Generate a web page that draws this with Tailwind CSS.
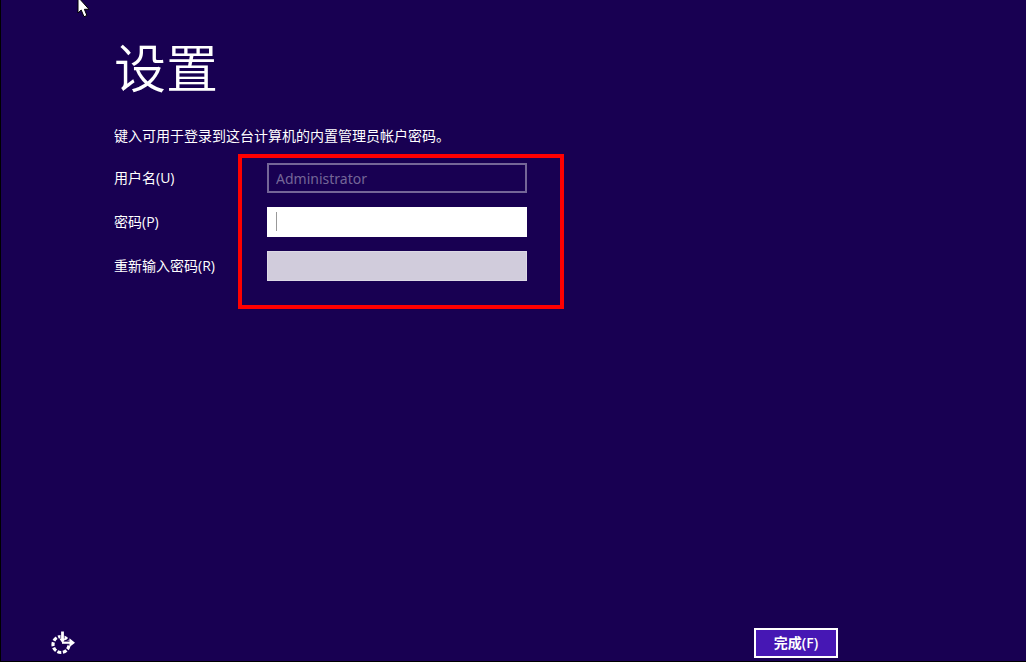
<!DOCTYPE html>
<html lang="zh-CN">
<head>
<meta charset="utf-8">
<meta name="viewport" content="width=device-width, initial-scale=1">
<title>设置</title>
<script src="https://cdn.jsdelivr.net/npm/@tailwindcss/browser@4"></script>
</head>
<body class="relative flex min-h-screen flex-col border-b border-l border-black bg-[#180052] font-['Open_Sans','Noto_Sans_CJK_SC',sans-serif] text-sm text-white">
  <main class="flex-1 pl-[113px] pt-8">
    <h1 class="font-['Noto_Sans_CJK_SC',sans-serif] text-[52px] leading-[68px] font-[350]">设置</h1>
    <p class="mt-[26px] leading-5">键入可用于登录到这台计算机的内置管理员帐户密码。</p>
    <form id="setup" class="relative mt-[17px] flex flex-col gap-[14px]">
      <div class="flex items-center">
        <label for="user" class="w-[153px]">用户名(U)</label>
        <input id="user" type="text" value="Administrator" disabled class="h-[30px] w-[260px] border-2 border-[#746697] bg-transparent px-[7px] font-['Noto_Sans',sans-serif] text-sm text-[#746697]">
      </div>
      <div class="flex items-center">
        <label for="pass" class="w-[153px]">密码(P)</label>
        <div class="relative">
          <input id="pass" type="password" class="block h-[30px] w-[260px] bg-white px-2 text-sm text-black caret-transparent outline-none">
          <span class="absolute left-[9px] top-[5px] h-[19px] w-px bg-[#999999]"></span>
        </div>
      </div>
      <div class="flex items-center">
        <label for="again" class="w-[153px]">重新输入密码(R)</label>
        <input id="again" type="password" class="h-[30px] w-[260px] border border-[#dcd8e5] bg-[#d1ccdc] px-2 text-sm text-black outline-none">
      </div>
      <div class="pointer-events-none absolute -top-[9px] left-[124px] h-[155px] w-[326px] border-4 border-[#ff0000]"></div>
    </form>
  </main>
  <footer class="flex items-end justify-between pb-[3px] pl-12 pr-[188px]">
    <button type="button" aria-label="轻松使用">
      <svg class="block" width="28" height="28" viewBox="0 0 28 28" fill="none" stroke="#fff">
        <circle cx="12" cy="14.500" r="8" stroke-width="3.200" stroke-dasharray="4 1.585" stroke-dashoffset="-1"/>
        <path d="M13.500 1v11M13.500 12.500h9" stroke="#180052" stroke-width="4"/>
        <path d="M13.500 1.500v9" stroke-width="2.800"/>
        <path d="M10.300 8.500h6.400l-3.200 4.700zM20.500 8.300l5.500 4.400-5.500 4.400z" fill="#fff" stroke="none"/>
        <path d="M13 12.700h9" stroke-width="2.200"/>
      </svg>
    </button>
    <button type="submit" form="setup" class="h-[30px] w-[84px] border-2 border-white bg-[#4617b4] font-semibold">完成(F)</button>
  </footer>
  <svg class="pointer-events-none absolute left-[76px] top-0" width="14" height="18" viewBox="0 0 14 18" aria-hidden="true">
    <path d="M1 -3V13l3.200-3 2.800 6.700 2.900-1.200L7.400 9.300H12z" fill="#fff" stroke="#000"/>
  </svg>
</body>
</html>
